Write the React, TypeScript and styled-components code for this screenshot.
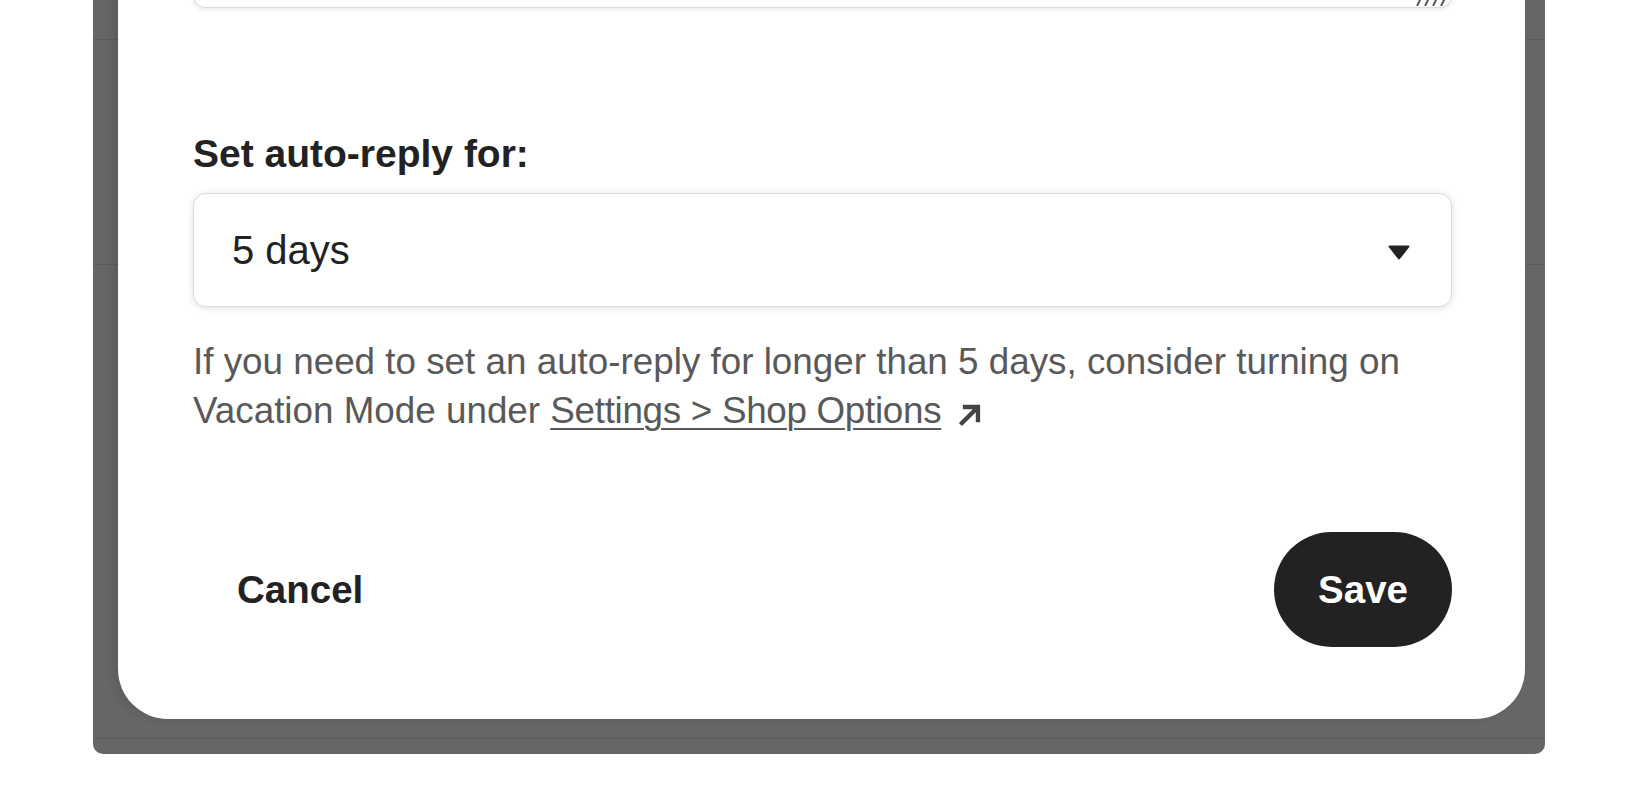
import React from "react";
import styled, { createGlobalStyle } from "styled-components";

const GlobalStyle = createGlobalStyle`
  html, body {
    margin: 0;
    padding: 0;
    background: #ffffff;
    overflow: hidden;
  }
  body {
    font-family: "Liberation Sans", Arial, sans-serif;
    color: #222222;
  }
  * { box-sizing: border-box; }
`;

const Screen = styled.div`
  height: 786px;
  display: flex;
  flex-direction: column;
  justify-content: flex-end;
  padding-bottom: 32px;
  overflow: hidden;
  background: #ffffff;
`;

const Window = styled.div`
  position: relative;
  flex: none;
  margin-left: 93px;
  width: 1452px;
  padding: 0 20px 35px 25px;
  border-radius: 0 0 10px 10px;
  overflow: hidden;
  background: #ffffff;
`;

const Backdrop = styled.div`
  position: absolute;
  inset: 0;
  display: flex;
  flex-direction: column;
  justify-content: flex-end;
`;

const BackdropRow = styled.div<{ $h: number }>`
  flex: none;
  height: ${(p) => p.$h}px;
  border-top: 1px solid #e4e4e4;
`;

const Dim = styled.div`
  position: absolute;
  inset: 0;
  background: rgba(0, 0, 0, 0.6);
`;

const Modal = styled.div`
  position: relative;
  z-index: 1;
  display: flex;
  flex-direction: column;
  padding: 0 73px 72px 75px;
  background: #ffffff;
  border-radius: 0 0 50px 50px;
  box-shadow: -5px 0 9px rgba(0, 0, 0, 0.1);
`;

const TextBox = styled.div`
  position: relative;
  height: 200px;
  border: 1px solid #d9d9d9;
  border-radius: 12px;
  background: #ffffff;
  box-shadow: 0 1px 5px rgba(34, 34, 34, 0.12);
`;

const ResizeGrip = styled.svg`
  position: absolute;
  right: 2px;
  bottom: 1px;
`;

const FieldLabel = styled.label`
  display: block;
  margin-top: 122px;
  font-size: 39px;
  line-height: 48px;
  font-weight: 700;
  color: #222222;
`;

const SelectBox = styled.div`
  margin-top: 15px;
  height: 114px;
  display: flex;
  align-items: center;
  justify-content: space-between;
  padding: 0 41px 0 38px;
  border: 1px solid #dcdcdc;
  border-radius: 13px;
  background: #ffffff;
  box-shadow: 0 1px 7px rgba(34, 34, 34, 0.14);
  font-size: 40px;
  color: #222222;
`;

const Caret = styled.svg`
  flex: none;
  margin-top: 4px;
`;

const HelpText = styled.p`
  margin: 30px 0 0;
  font-size: 36.8px;
  line-height: 49px;
  color: #595959;
`;

const HelpLink = styled.a`
  color: #595959;
  letter-spacing: -0.3px;
  text-decoration: underline;
  text-decoration-thickness: 2px;
  text-underline-offset: 5px;
`;

const ExternalIcon = styled.svg`
  margin-left: 14px;
  vertical-align: -7px;
`;

const Footer = styled.div`
  margin-top: 97px;
  display: flex;
  align-items: center;
  justify-content: space-between;
`;

const Button = styled.button<{ $primary?: boolean }>`
  height: 115px;
  padding: 0 44px;
  border: none;
  border-radius: 58px;
  font-family: "Liberation Sans", Arial, sans-serif;
  font-size: 38.5px;
  font-weight: 700;
  cursor: pointer;
  background: ${(p) => (p.$primary ? "#222222" : "transparent")};
  color: ${(p) => (p.$primary ? "#ffffff" : "#222222")};
`;

export default function App() {
  return (
    <>
      <GlobalStyle />
      <Screen>
        <Window>
          <Backdrop>
            <BackdropRow $h={225} />
            <BackdropRow $h={474} />
            <BackdropRow $h={16} />
          </Backdrop>
          <Dim />
          <Modal>
            <TextBox>
              <ResizeGrip width="34" height="12" viewBox="0 0 34 12">
                {[0, 1, 2, 3].map((i) => (
                  <line
                    key={i}
                    x1={i * 8 + 2}
                    y1={12}
                    x2={i * 8 + 8}
                    y2={0}
                    stroke="#555"
                    strokeWidth="2"
                  />
                ))}
              </ResizeGrip>
            </TextBox>
            <FieldLabel>Set auto-reply for:</FieldLabel>
            <SelectBox>
              <span>5 days</span>
              <Caret width="22" height="15" viewBox="0 0 22 15">
                <path
                  d="M1.5 1.5 H20.5 L11 13.5 Z"
                  fill="#222"
                  stroke="#222"
                  strokeWidth="2"
                  strokeLinejoin="round"
                />
              </Caret>
            </SelectBox>
            <HelpText>
              <span>If you need to set an auto-reply for longer than 5 days, consider turning on </span>
              <span>Vacation Mode under </span>
              <HelpLink href="#">Settings &gt; Shop Options</HelpLink>
              <ExternalIcon width="29" height="29" viewBox="0 0 24 24">
                <path
                  d="M4.5 19.5 L17 7 M6.5 5 H19 V17.5"
                  fill="none"
                  stroke="#444"
                  strokeWidth="3.6"
                  strokeLinecap="butt"
                  strokeLinejoin="miter"
                />
              </ExternalIcon>
            </HelpText>
            <Footer>
              <Button>Cancel</Button>
              <Button $primary>Save</Button>
            </Footer>
          </Modal>
        </Window>
      </Screen>
    </>
  );
}
